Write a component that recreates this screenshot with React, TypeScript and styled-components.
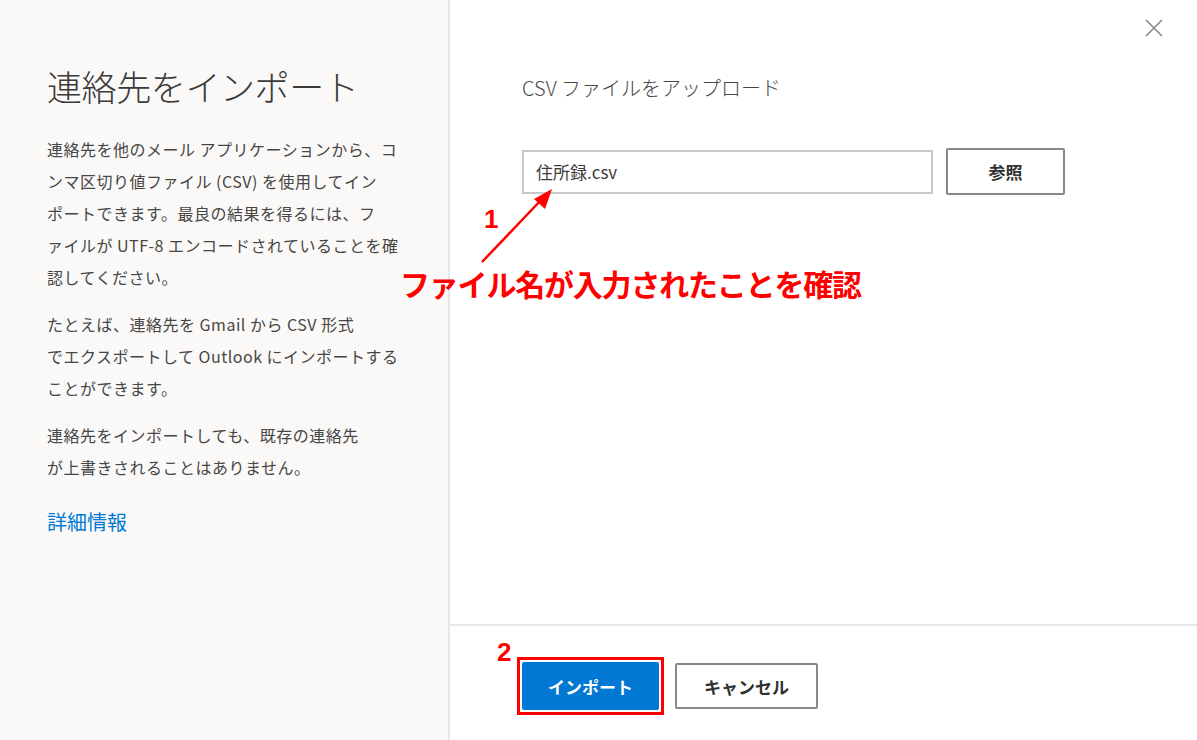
import styled, { createGlobalStyle } from 'styled-components';

const GlobalStyle = createGlobalStyle`
  html, body {
    margin: 0;
    padding: 0;
    background: #ffffff;
  }
  body {
    font-family: "Noto Sans CJK JP", "Noto Sans", sans-serif;
    color: #323130;
  }
`;

const Dialog = styled.div`
  position: relative;
  display: flex;
  width: 1197px;
  height: 740px;
  overflow: hidden;
`;

const SidePanel = styled.aside`
  width: 450px;
  flex-shrink: 0;
  box-sizing: border-box;
  padding: 60px 0 0 47px;
  background: #faf9f8;
  border-right: 2px solid #e8e8e8;
`;

const SideTitle = styled.h1`
  margin: 0 0 21px;
  font-size: 35px;
  font-weight: 300;
  line-height: 52px;
  color: #3b3a39;
  letter-spacing: -0.4px;
`;

const SideText = styled.p`
  margin: 0 0 15px;
  font-size: 16px;
  line-height: 32px;
  color: #484644;
  letter-spacing: 0.5px;
`;

const Line = styled.span`
  display: block;
  white-space: nowrap;
`;

const MoreLink = styled.a`
  display: inline-block;
  margin-top: 8px;
  font-size: 20px;
  line-height: 32px;
  color: #0078d4;
  text-decoration: none;
`;

const MainPanel = styled.section`
  position: relative;
  flex: 1;
  display: flex;
  flex-direction: column;
`;

const TopBar = styled.div`
  display: flex;
  justify-content: flex-end;
  align-items: center;
  height: 56px;
  padding-right: 30px;
`;

const CloseButton = styled.button`
  display: flex;
  align-items: center;
  justify-content: center;
  width: 26px;
  height: 26px;
  padding: 0;
  border: none;
  background: transparent;
  color: #8a8886;
`;

const Body = styled.div`
  flex: 1;
  padding: 18px 0 0 72px;
`;

const UploadTitle = styled.h2`
  margin: 0 0 46px;
  font-size: 20px;
  font-weight: 300;
  line-height: 28px;
  color: #484644;
`;

const FileRow = styled.div`
  display: flex;
  align-items: center;
  gap: 13px;
`;

const FileInput = styled.div`
  box-sizing: border-box;
  width: 411px;
  height: 44px;
  padding: 0 12px;
  display: flex;
  align-items: center;
  border: 2px solid #c8c8c8;
  font-size: 17px;
  color: #3b3a39;
`;

const Button = styled.button<{ $primary?: boolean }>`
  box-sizing: border-box;
  height: 47px;
  border-radius: 2px;
  font-family: "Noto Sans CJK JP", sans-serif;
  font-size: 17px;
  font-weight: 700;
  border: 2px solid ${(p) => (p.$primary ? '#0078d4' : '#8a8886')};
  background: ${(p) => (p.$primary ? '#0078d4' : '#ffffff')};
  color: ${(p) => (p.$primary ? '#ffffff' : '#323130')};
`;

const BrowseButton = styled(Button)`
  width: 119px;
`;

const Footer = styled.div`
  height: 116px;
  box-sizing: border-box;
  border-top: 2px solid #e8e8e8;
  display: flex;
  align-items: flex-start;
  gap: 11px;
  padding: 31px 0 0 67px;
`;

const Highlight = styled.div`
  padding: 2px;
  border: 3px solid #ff0000;
`;

const ImportButton = styled(Button)`
  width: 137px;
  height: 48px;
`;

const CancelButton = styled(Button)`
  width: 143px;
  height: 46px;
  margin-top: 6px;
`;

const StepNumber = styled.span<{ $x: number; $y: number }>`
  position: absolute;
  left: ${(p) => p.$x}px;
  top: ${(p) => p.$y}px;
  font-family: "Liberation Sans", Arial, sans-serif;
  font-size: 26px;
  font-weight: 700;
  line-height: 26px;
  color: #ff0000;
`;

const Callout = styled.div`
  position: absolute;
  left: 400px;
  top: 263px;
  font-size: 30px;
  font-weight: 700;
  line-height: 40px;
  color: #ff0000;
  letter-spacing: -1.2px;
  white-space: nowrap;
`;

const Arrow = styled.svg`
  position: absolute;
  left: 470px;
  top: 185px;
  overflow: visible;
`;

export default function App() {
  return (
    <>
      <GlobalStyle />
      <Dialog>
        <SidePanel>
          <SideTitle>連絡先をインポート</SideTitle>
          <SideText>
            <Line>連絡先を他のメール アプリケーションから、コ</Line>
            <Line>ンマ区切り値ファイル (CSV) を使用してイン</Line>
            <Line>ポートできます。最良の結果を得るには、フ</Line>
            <Line>ァイルが UTF-8 エンコードされていることを確</Line>
            <Line>認してください。</Line>
          </SideText>
          <SideText>
            <Line>たとえば、連絡先を Gmail から CSV 形式</Line>
            <Line>でエクスポートして Outlook にインポートする</Line>
            <Line>ことができます。</Line>
          </SideText>
          <SideText>
            <Line>連絡先をインポートしても、既存の連絡先</Line>
            <Line>が上書きされることはありません。</Line>
          </SideText>
          <MoreLink href="#">詳細情報</MoreLink>
        </SidePanel>

        <MainPanel>
          <TopBar>
            <CloseButton aria-label="閉じる">
              <svg width="18" height="18" viewBox="0 0 18 18">
                <path d="M1 1 L17 17 M17 1 L1 17" stroke="currentColor" strokeWidth="1.6" fill="none" />
              </svg>
            </CloseButton>
          </TopBar>
          <Body>
            <UploadTitle>CSV ファイルをアップロード</UploadTitle>
            <FileRow>
              <FileInput>住所録.csv</FileInput>
              <BrowseButton>参照</BrowseButton>
            </FileRow>
          </Body>
          <Footer>
            <Highlight>
              <ImportButton $primary>インポート</ImportButton>
            </Highlight>
            <CancelButton>キャンセル</CancelButton>
          </Footer>
        </MainPanel>

        <Arrow width="90" height="80" viewBox="0 0 90 80">
          <line x1="12" y1="77" x2="72" y2="14" stroke="#ff0000" strokeWidth="2.5" />
          <polygon points="82,4 64,14 75,24" fill="#ff0000" />
        </Arrow>
        <StepNumber $x={484} $y={206}>1</StepNumber>
        <Callout>ファイル名が入力されたことを確認</Callout>
        <StepNumber $x={497} $y={639}>2</StepNumber>
      </Dialog>
    </>
  );
}
